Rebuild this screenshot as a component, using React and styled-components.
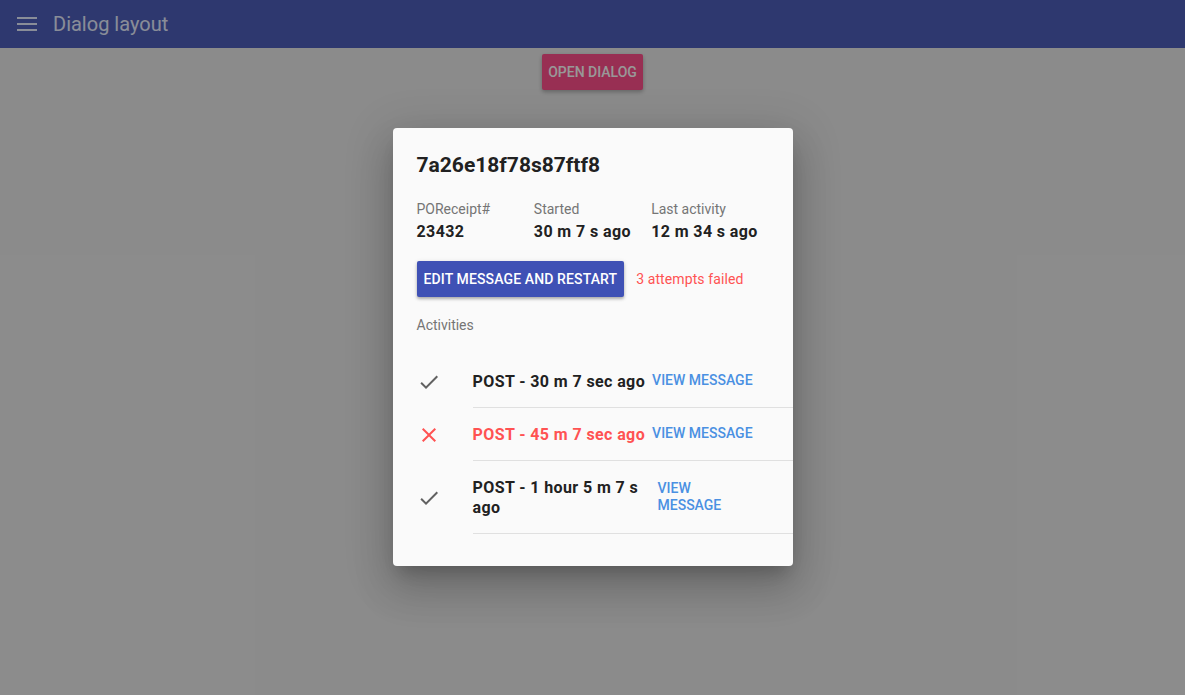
import React from "react";
import styled, { createGlobalStyle } from "styled-components";

const Global = createGlobalStyle`
  html, body { margin: 0; padding: 0; }
  body {
    font-family: Roboto, "Noto Sans", "Liberation Sans", sans-serif;
    background: #e8e8e8;
    -webkit-font-smoothing: antialiased;
  }
  * { box-sizing: border-box; }
`;

const Page = styled.div`
  position: relative;
  width: 1185px;
  height: 695px;
  overflow: hidden;
  background: #e8e8e8;
`;

const AppBar = styled.header`
  height: 48px;
  background: #3f51b5;
  display: flex;
  align-items: center;
  padding: 0 17px;
  gap: 16px;
  color: #e4ecff;
`;

const Title = styled.h1`
  margin: 0;
  font-size: 20px;
  font-weight: 400;
  color: #e4ecff;
`;

const Main = styled.main`
  display: flex;
  justify-content: center;
  padding-top: 6px;
`;

const PinkButton = styled.button`
  height: 36px;
  padding: 0 6px;
  border: none;
  border-radius: 2px;
  background: #ff4081;
  color: #ffffff;
  font-family: inherit;
  font-size: 14px;
  font-weight: 500;
  text-transform: uppercase;
  box-shadow: 0 2px 4px rgba(0,0,0,0.3);
`;

const Backdrop = styled.div`
  position: absolute;
  inset: 0;
  background: rgba(27, 27, 27, 0.45);
  display: flex;
  justify-content: center;
  align-items: flex-start;
  padding-top: 128px;
`;

const Dialog = styled.div`
  width: 400px;
  background: #fafafa;
  border-radius: 4px;
  box-shadow: 0 11px 15px -7px rgba(0,0,0,0.2), 0 24px 38px 3px rgba(0,0,0,0.14), 0 9px 46px 8px rgba(0,0,0,0.12);
  padding: 24px 0 32px 0;
  color: #212121;
`;

const Section = styled.div`
  padding: 0 24px;
`;

const DialogTitle = styled.h2`
  margin: 0;
  font-size: 21px;
  line-height: 26px;
  font-weight: 700;
  color: #212121;
`;

const InfoGrid = styled.div`
  display: grid;
  grid-template-columns: repeat(3, 1fr);
  margin-top: 21px;
`;

const InfoLabel = styled.div`
  font-size: 14px;
  line-height: 20px;
  color: #757575;
`;

const InfoValue = styled.div`
  font-size: 16px;
  line-height: 24px;
  margin-top: 1px;
  font-weight: 700;
  letter-spacing: 0.4px;
  color: #212121;
`;

const ActionRow = styled.div`
  display: flex;
  align-items: center;
  gap: 12px;
  margin-top: 17px;
`;

const PrimaryButton = styled.button`
  height: 36px;
  padding: 0 7px;
  border: none;
  border-radius: 2px;
  background: #3f51b5;
  color: #ffffff;
  font-family: inherit;
  font-size: 14px;
  font-weight: 500;
  letter-spacing: 0.12px;
  text-transform: uppercase;
  box-shadow: 0 2px 3px rgba(0,0,0,0.25), 0 1px 5px rgba(0,0,0,0.12);
`;

const FailNote = styled.span`
  font-size: 14px;
  letter-spacing: 0.1px;
  color: #ff5252;
`;

const SubHeader = styled.div`
  font-size: 14px;
  line-height: 20px;
  color: #757575;
  margin-top: 18px;
`;

const List = styled.ul`
  list-style: none;
  margin: 20px 0 0 0;
  padding: 0;
`;

const Item = styled.li`
  display: flex;
  align-items: center;
  padding-left: 24px;
`;

const IconBox = styled.div`
  width: 56px;
  flex: 0 0 56px;
  display: flex;
  align-items: center;
  color: ${p => (p.$failed ? "#ff5252" : "#616161")};
`;

const ItemBody = styled.div`
  flex: 1;
  display: flex;
  align-items: center;
  padding: 17px 38px 15px 0;
  border-bottom: 1px solid #e0e0e0;
`;

const ItemText = styled.div`
  flex: 0 1 auto;
  max-width: 178px;
  font-size: 16px;
  line-height: 20px;
  font-weight: 700;
  letter-spacing: 0.4px;
  color: ${p => (p.$failed ? "#ff5252" : "#212121")};
`;

const LinkButton = styled.button`
  flex: 0 1 auto;
  border: none;
  background: transparent;
  padding: 0 0 0 7px;
  margin-bottom: 3px;
  font-family: inherit;
  font-size: 14px;
  line-height: 17px;
  font-weight: 500;
  text-transform: uppercase;
  text-align: left;
  color: #4a90e2;
`;

const MenuIcon = () => (
  <svg width="20" height="14" viewBox="0 0 20 14" fill="currentColor">
    <rect x="0" y="0" width="20" height="2" />
    <rect x="0" y="6" width="20" height="2" />
    <rect x="0" y="12" width="20" height="2" />
  </svg>
);

const CheckIcon = () => (
  <svg width="24" height="24" viewBox="0 0 24 24" fill="currentColor">
    <path d="M9 16.17L4.83 12l-1.42 1.41L9 19 21 7l-1.41-1.41z" />
  </svg>
);

const CloseIcon = () => (
  <svg width="24" height="24" viewBox="0 0 24 24" fill="currentColor">
    <path d="M19 6.41L17.59 5 12 10.59 6.41 5 5 6.41 10.59 12 5 17.59 6.41 19 12 13.41 17.59 19 19 17.59 13.41 12z" />
  </svg>
);

const activities = [
  { text: "POST - 30 m 7 sec ago", failed: false },
  { text: "POST - 45 m 7 sec ago", failed: true },
  { text: "POST - 1 hour 5 m 7 s ago", failed: false },
];

export default function App() {
  return (
    <Page>
      <Global />
      <AppBar>
        <MenuIcon />
        <Title>Dialog layout</Title>
      </AppBar>
      <Main>
        <PinkButton>Open dialog</PinkButton>
      </Main>
      <Backdrop>
        <Dialog>
          <Section>
            <DialogTitle>7a26e18f78s87ftf8</DialogTitle>
            <InfoGrid>
              <div>
                <InfoLabel>POReceipt#</InfoLabel>
                <InfoValue>23432</InfoValue>
              </div>
              <div>
                <InfoLabel>Started</InfoLabel>
                <InfoValue>30 m 7 s ago</InfoValue>
              </div>
              <div>
                <InfoLabel>Last activity</InfoLabel>
                <InfoValue>12 m 34 s ago</InfoValue>
              </div>
            </InfoGrid>
            <ActionRow>
              <PrimaryButton>Edit message and restart</PrimaryButton>
              <FailNote>3 attempts failed</FailNote>
            </ActionRow>
            <SubHeader>Activities</SubHeader>
          </Section>
          <List>
            {activities.map((a, i) => (
              <Item key={i}>
                <IconBox $failed={a.failed}>
                  {a.failed ? <CloseIcon /> : <CheckIcon />}
                </IconBox>
                <ItemBody>
                  <ItemText $failed={a.failed}>{a.text}</ItemText>
                  <LinkButton>View message</LinkButton>
                </ItemBody>
              </Item>
            ))}
          </List>
        </Dialog>
      </Backdrop>
    </Page>
  );
}
